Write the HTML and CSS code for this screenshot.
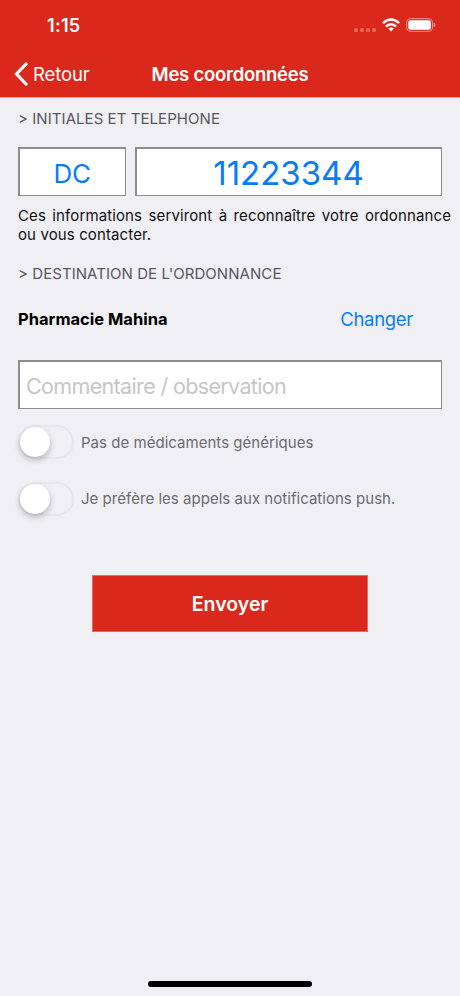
FILE: index.html
```html
<!DOCTYPE html>
<html lang="fr">
<head>
<meta charset="utf-8">
<title>Mes coordonnées</title>
<link rel="stylesheet" href="styles.css">
</head>
<body>
<div class="screen">
  <header class="header">
    <div class="status">
      <span class="time">1:15</span>
      <div class="indicators">
        <div class="signal"><i></i><i></i><i></i><i></i></div>
        <svg class="wifi" width="18" height="14" viewBox="0 0 18 14" fill="none" stroke="#fff" stroke-width="2.5">
          <path d="M.9 5.2Q9-2.2 17.1 5.2"/>
          <path d="M3.9 8.5Q9 3.9 14.1 8.5"/>
          <path d="M9 13.4L6.2 10.6Q9 8.3 11.8 10.6Z" fill="#fff" stroke="none"/>
        </svg>
        <svg class="battery" width="30" height="14" viewBox="0 0 30 14">
          <rect x=".7" y=".6" width="25.8" height="12.8" rx="3.8" fill="none" stroke="#fff" stroke-opacity=".5"/>
          <rect x="2.3" y="2.2" width="22.6" height="9.6" rx="2.2" fill="#fff"/>
          <path d="M27.7 4.8Q29.4 5.3 29.4 7T27.7 9.2Z" fill="#fff" fill-opacity=".55"/>
        </svg>
      </div>
    </div>
    <nav class="nav">
      <a class="back">
        <svg width="14" height="24" viewBox="0 0 14 24" fill="none" stroke="#fff" stroke-width="3.2" stroke-linecap="round" stroke-linejoin="miter"><path d="M12 2L2.5 12L12 22"/></svg>
        <span>Retour</span>
      </a>
      <h1 class="title">Mes coordonnées</h1>
    </nav>
  </header>
  <main class="content">
    <h2 class="label label-phone">&gt; INITIALES ET TELEPHONE</h2>
    <div class="fields">
      <div class="box initials"><span>DC</span></div>
      <div class="box phone"><span>11223344</span></div>
    </div>
    <p class="hint">Ces informations serviront à reconnaître votre ordonnance ou vous contacter.</p>
    <h2 class="label label-dest">&gt; DESTINATION DE L'ORDONNANCE</h2>
    <div class="pharmacy">
      <strong>Pharmacie Mahina</strong>
      <a class="change">Changer</a>
    </div>
    <div class="box comment"><span>Commentaire / observation</span></div>
    <div class="option"><span class="switch"><span class="knob"></span></span><span>Pas de médicaments génériques</span></div>
    <div class="option"><span class="switch"><span class="knob"></span></span><span>Je préfère les appels aux notifications push.</span></div>
    <button class="send"><span>Envoyer</span></button>
  </main>
  <div class="home"></div>
</div>
</body>
</html>
```
FILE: styles.css
```css
* { box-sizing: border-box; }
body { margin: 0; font-family: Inter, sans-serif; background: #efeff4; }
.screen { width: 460px; height: 996px; display: flex; flex-direction: column; overflow: hidden; }
.header { height: 98px; flex: none; background: #da291c; color: #fff; border-bottom: 1px solid #e8a09c; }
.status { height: 50px; display: flex; justify-content: space-between; padding: 0 24px 0 47px; align-items: center; }
.time { font-size: 18px; font-weight: 600; letter-spacing: .3px; }
.indicators { display: flex; align-items: center; }
.signal { display: flex; gap: 2px; margin: 9px 6px 0 0; }
.signal i { width: 4px; height: 4px; border-radius: 1.5px; background: #e66558; }
.wifi { margin-right: 6px; }
.nav { height: 47px; display: grid; grid-template-columns: 110px 1fr 110px; align-items: center; }
.back { display: flex; align-items: center; gap: 5px; padding-left: 14px; font-size: 18.5px; letter-spacing: -.1px; }
.title { margin: 0; text-align: center; font-size: 18.5px; font-weight: 600; letter-spacing: -.25px; white-space: nowrap; }
.content { flex: 1; padding: 0 18px; }
.label { margin: 0; height: 20px; line-height: 20px; font-size: 15px; font-weight: 400; color: #58585c; letter-spacing: .06px; white-space: nowrap; }
.label-phone { margin-top: 11px; }
.fields { display: flex; gap: 9px; margin-top: 18px; }
.box { height: 49px; background: #fff; border: 1px solid #8d8d91; border-top-width: 2px; border-left-width: 2px; display: flex; align-items: center; justify-content: center; color: #087cf5; white-space: nowrap; }
.initials { width: 108px; font-size: 26px; letter-spacing: -.4px; padding: 3px 1px 0 0; }
.phone { flex: 1; font-size: 33px; letter-spacing: 0; padding: 2px 1px 0 0; }
.hint { margin: 10px -9px 0 0; font-size: 15px; line-height: 19px; letter-spacing: .12px; text-align: justify; color: #111; }
.label-dest { margin-top: 20px; }
.pharmacy { margin-top: 22px; height: 26px; display: flex; justify-content: space-between; align-items: center; padding-right: 29px; font-size: 16.5px; }
.change { font-size: 18.5px; letter-spacing: -.3px; color: #087cf5; }
.comment { margin: 28px 0 5px; justify-content: flex-start; padding: 1px 0 0 6px; font-size: 21.5px; letter-spacing: -.65px; color: #c6c6c8; }
.option { height: 56.5px; display: flex; align-items: center; gap: 7px; font-size: 15px; letter-spacing: .03px; color: #6b6b70; white-space: nowrap; }
.switch { width: 56px; height: 34px; border-radius: 17px; border: 2px solid #e7e7eb; display: flex; align-items: center; }
.knob { width: 30px; height: 30px; border-radius: 50%; background: #fff; box-shadow: 0 3px 6px rgba(0,0,0,.24); }
.send { display: flex; align-items: center; justify-content: center; width: 276px; height: 57px; margin: 48px auto 0; padding: 0; border: 1px solid #e56a61; background: #da291c; color: #fff; font: 600 19.5px Inter, sans-serif; letter-spacing: 0; }
.home { width: 164px; height: 6px; border-radius: 3px; background: #000; margin: 0 auto 9px; flex: none; }
```
